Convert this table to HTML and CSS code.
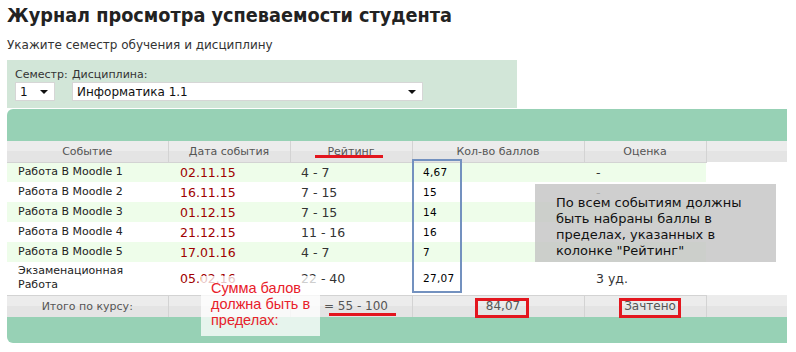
FILE: index.html
```html
<!DOCTYPE html>
<html lang="ru">
<head>
<meta charset="utf-8">
<title>Журнал просмотра успеваемости студента</title>
<link rel="stylesheet" href="styles.css">
</head>
<body>
<div class="page">
  <h1 class="title">Журнал просмотра успеваемости студента</h1>
  <p class="subtitle">Укажите семестр обучения и дисциплину</p>
  <div class="filters">
    <div class="field field-semester">
      <span class="label">Семестр:</span>
      <div class="select select-small"><span>1</span><span class="arrow"></span></div>
    </div>
    <div class="field field-discipline">
      <span class="label">Дисциплина:</span>
      <div class="select select-wide"><span>Информатика 1.1</span><span class="arrow"></span></div>
    </div>
  </div>

  <div class="journal">
    <div class="band band-top"></div>
    <table class="grid">
      <colgroup>
        <col class="c1"><col class="c2"><col class="c3"><col class="c4"><col class="c5"><col class="c6">
      </colgroup>
      <thead>
        <tr>
          <th>Событие</th>
          <th>Дата события</th>
          <th>Рейтинг</th>
          <th>Кол-во баллов</th>
          <th>Оценка</th>
          <th class="spare"></th>
        </tr>
      </thead>
      <tbody>
        <tr class="odd">
          <td class="event">Работа В Moodle 1</td><td class="date">02.11.15</td><td class="range">4 - 7</td><td class="score">4,67</td><td class="grade">-</td><td class="spare"></td>
        </tr>
        <tr>
          <td class="event">Работа В Moodle 2</td><td class="date">16.11.15</td><td class="range">7 - 15</td><td class="score">15</td><td class="grade">-</td><td class="spare"></td>
        </tr>
        <tr class="odd">
          <td class="event">Работа В Moodle 3</td><td class="date">01.12.15</td><td class="range">7 - 15</td><td class="score">14</td><td class="grade"></td><td class="spare"></td>
        </tr>
        <tr>
          <td class="event">Работа В Moodle 4</td><td class="date">21.12.15</td><td class="range">11 - 16</td><td class="score">16</td><td class="grade"></td><td class="spare"></td>
        </tr>
        <tr class="odd">
          <td class="event">Работа В Moodle 5</td><td class="date">17.01.16</td><td class="range">4 - 7</td><td class="score">7</td><td class="grade"></td><td class="spare"></td>
        </tr>
        <tr class="tall">
          <td class="event">Экзаменационная Работа</td><td class="date">05.02.16</td><td class="range">22 - 40</td><td class="score">27,07</td><td class="grade">3 уд.</td><td class="spare"></td>
        </tr>
      </tbody>
      <tfoot>
        <tr>
          <td>Итого по курсу:</td>
          <td></td>
          <td class="total-range">= 55 - 100</td>
          <td class="total-score">84,07</td>
          <td class="total-result">Зачтено</td>
          <td class="spare"></td>
        </tr>
      </tfoot>
    </table>
    <div class="band band-bottom"></div>
  </div>

  <div class="mark mark-rating"></div>
  <div class="mark mark-total"></div>
  <div class="frame frame-scores"></div>
  <div class="frame frame-sum"></div>
  <div class="frame frame-result"></div>
  <div class="note note-grey">По всем событиям должны быть набраны баллы в пределах, указанных в колонке "Рейтинг"</div>
  <div class="note note-red">Сумма балов должна быть в пределах:</div>
</div>
</body>
</html>
```

FILE: styles.css
```css
* { box-sizing: border-box; }
html, body { margin: 0; padding: 0; background: #fff; }
body { font-family: "DejaVu Sans", Verdana, sans-serif; color: #222; }

.page { position: relative; width: 796px; height: 352px; padding: 0 9px 0 7px; overflow: hidden; }

.title {
  margin: 0;
  padding-top: 4px;
  font-family: "DejaVu Sans Condensed", "DejaVu Sans", sans-serif;
  font-stretch: condensed;
  font-size: 19.7px;
  line-height: 24px;
  font-weight: bold;
  color: #222;
  white-space: nowrap;
}
.subtitle { margin: 9px 0 0; font-size: 12px; line-height: 16px; color: #333; }

.filters {
  margin-top: 7px;
  width: 510px;
  height: 48px;
  background: #d2e6d8;
  padding: 7px 8px 0;
  display: flex;
  gap: 17px;
}
.field { display: flex; flex-direction: column; }
.field-semester { width: 40px; }
.label { font-size: 11px; line-height: 15px; color: #333; white-space: nowrap; }
.select {
  height: 19px;
  background: #fff;
  border: 1px solid #d6d6d6;
  display: flex;
  align-items: center;
  justify-content: space-between;
  padding: 0 6px 0 4px;
  font-size: 12px;
  color: #111;
}
.select-small { width: 40px; }
.select-wide { width: 351px; }
.arrow { width: 0; height: 0; border-left: 4px solid transparent; border-right: 4px solid transparent; border-top: 4px solid #111; }

.journal { margin-top: 1px; width: 780px; }
.band { background: #97d1b5; }
.band-top { height: 32px; border-top-left-radius: 6px; }
.band-bottom { height: 26px; border-bottom-left-radius: 6px; }

.grid { width: 780px; border-collapse: collapse; table-layout: fixed; }
.c1 { width: 161px; } .c2 { width: 122px; } .c3 { width: 122px; } .c4 { width: 172px; } .c5 { width: 122px; } .c6 { width: 81px; }

.grid thead tr, .grid tfoot tr { background: linear-gradient(#ececec 0, #ececec 50%, #e4e4e4 50%, #e4e4e4 100%); }
.grid th {
  height: 21px;
  padding: 0;
  font-weight: normal;
  font-size: 11px;
  color: #555;
  text-align: center;
  border-right: 1px solid #d3d3d3;
  border-bottom: 1px solid #d3d3d3;
}
.grid th.spare, .grid tfoot td.spare { border: 0; }

.grid tbody td { height: 20px; padding: 0; font-size: 12.5px; color: #333; }
.grid tbody tr.odd td { background: #eefdea; }
.grid tbody tr.tall td { height: 33px; }
.grid tbody td.spare, .grid tbody tr.odd td.spare { background: #fff; }
.grid td.event { padding: 0 30px 0 11px; font-size: 11px; line-height: 14px; color: #222; }
.grid td.date { padding-left: 12px; color: #a00000; }
.grid td.range { padding-left: 11px; }
.grid td.score { padding-left: 11px; font-size: 10.5px; color: #000; letter-spacing: 0.3px; }
.grid td.grade { padding-left: 12px; }

.grid tfoot td {
  height: 22px;
  padding: 0;
  font-size: 11px;
  color: #555;
  text-align: center;
  border-top: 1px solid #d3d3d3;
  border-right: 1px solid #d3d3d3;
}
.grid tfoot td.total-range { font-size: 12px; padding-left: 10px; }
.grid tfoot td.total-score { font-size: 12px; padding-left: 10px; }
.grid tfoot td.total-result { font-size: 12px; padding-left: 10px; }

.mark { position: absolute; height: 3px; background: #e3161e; }
.mark-rating { left: 315px; top: 155px; width: 68px; }
.mark-total { left: 329px; top: 313px; width: 67px; }

.frame { position: absolute; }
.frame-scores { left: 412px; top: 159px; width: 50px; height: 134px; border: 2px solid #7391bf; }
.frame-sum { left: 475px; top: 298px; width: 54px; height: 20px; border: 3px solid #e3161e; }
.frame-result { left: 619px; top: 298px; width: 62px; height: 20px; border: 3px solid #e3161e; }

.note { position: absolute; font-size: 13px; line-height: 16px; }
.note-grey {
  left: 535px; top: 184px; width: 241px; height: 78px;
  padding: 11px 10px 0 21px;
  background: rgba(196, 197, 196, 0.82);
  color: #111;
}
.note-red {
  left: 201px; top: 276px; width: 119px; height: 60px;
  padding: 4px 4px 0 10px;
  background: rgba(255, 255, 255, 0.76);
  color: #e8202a;
  font-family: "Liberation Sans", Arial, sans-serif;
  font-size: 14.5px;
}
```
